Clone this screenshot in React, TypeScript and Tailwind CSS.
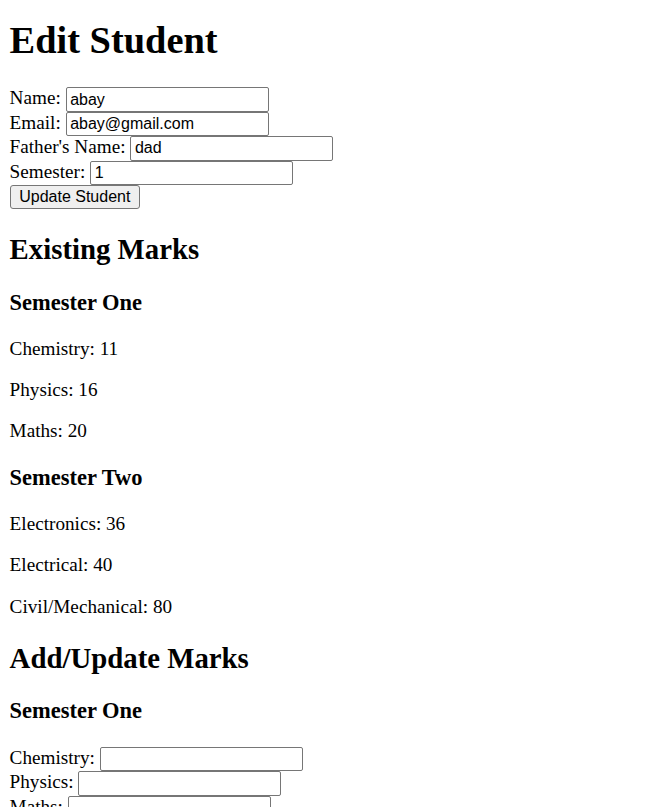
import React from "react";

const inputCls =
  "inline-block align-baseline w-[203px] h-[24.4px] border border-[#767676] rounded-[2px] bg-white pl-[3.6px] pr-[2.4px] py-0 text-[16px] leading-[normal] text-black [font-family:'Liberation_Sans',Arial,sans-serif] outline-none";

function Field({ label, value }: { label: string; value?: string }) {
  return (
    <>
      {label}{" "}
      <input type="text" className={inputCls} defaultValue={value ?? ""} />
      <br />
    </>
  );
}

export default function App() {
  return (
    <div className="bg-white text-black [font-family:'Liberation_Serif','Times_New_Roman',serif] text-[19.2px] leading-[normal] px-[9.6px] h-[807px] overflow-hidden">
      <h1 className="text-[38.4px] font-bold leading-[normal] mt-[17.8px] mb-[25.7px]">
        Edit Student
      </h1>
      <form onSubmit={(e) => e.preventDefault()}>
        <Field label="Name:" value="abay" />
        <Field label="Email:" value="abay@gmail.com" />
        <Field label="Father's Name:" value="dad" />
        <Field label="Semester:" value="1" />
        <button
          type="submit"
          className="inline-block align-baseline h-[23.4px] border border-[#767676] rounded-[3px] bg-[#efefef] px-[8.6px] py-0 text-[16px] leading-[normal] text-black [font-family:'Liberation_Sans',Arial,sans-serif]"
        >
          Update Student
        </button>
      </form>

      <h2 className="text-[28.8px] font-bold leading-[normal] my-[23.9px]">
        Existing Marks
      </h2>
      <h3 className="text-[22.46px] font-bold leading-[normal] my-[22.46px]">
        Semester One
      </h3>
      <p className="my-[19.2px]">Chemistry: 11</p>
      <p className="my-[19.2px]">Physics: 16</p>
      <p className="my-[19.2px]">Maths: 20</p>
      <h3 className="text-[22.46px] font-bold leading-[normal] my-[22.46px]">
        Semester Two
      </h3>
      <p className="my-[19.2px]">Electronics: 36</p>
      <p className="my-[19.2px]">Electrical: 40</p>
      <p className="my-[19.2px]">Civil/Mechanical: 80</p>

      <h2 className="text-[28.8px] font-bold leading-[normal] my-[23.9px]">
        Add/Update Marks
      </h2>
      <form onSubmit={(e) => e.preventDefault()}>
        <h3 className="text-[22.46px] font-bold leading-[normal] my-[22.46px]">
          Semester One
        </h3>
        <Field label="Chemistry:" />
        <Field label="Physics:" />
        <Field label="Maths:" />
      </form>
    </div>
  );
}
